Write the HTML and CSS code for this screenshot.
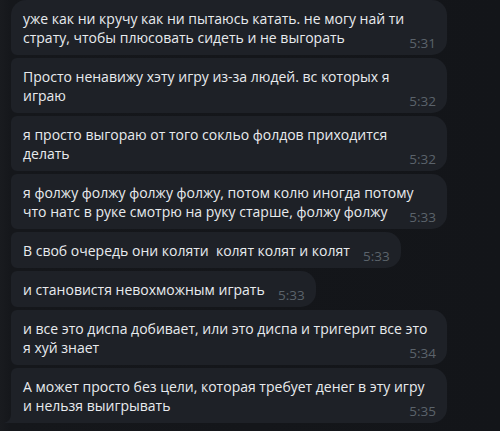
FILE: index.html
```html
<!DOCTYPE html>
<html lang="ru">
<head>
<meta charset="utf-8">
<title>Chat</title>
<link rel="stylesheet" href="styles.css">
</head>
<body>
<div class="chat">
  <div class="msg first"><span class="text">уже как ни кручу как ни пытаюсь катать. не могу най ти страту, чтобы плюсовать сидеть и не выгорать</span><span class="spacer"></span><span class="time">5:31</span></div>
  <div class="msg"><span class="text">Просто ненавижу хэту игру из-за людей. вс которых я играю</span><span class="spacer"></span><span class="time">5:32</span></div>
  <div class="msg"><span class="text">я просто выгораю от того сокльо фолдов приходится делать</span><span class="spacer"></span><span class="time">5:32</span></div>
  <div class="msg"><span class="text">я фолжу фолжу фолжу фолжу, потом колю иногда потому что натс в руке смотрю на руку старше, фолжу фолжу</span><span class="spacer"></span><span class="time">5:33</span></div>
  <div class="msg"><span class="text">В своб очередь они коляти&nbsp; колят колят и колят</span><span class="spacer"></span><span class="time">5:33</span></div>
  <div class="msg"><span class="text">и становистя невохможным играть</span><span class="spacer"></span><span class="time">5:33</span></div>
  <div class="msg"><span class="text">и все это диспа добивает, или это диспа и тригерит все это я хуй знает</span><span class="spacer"></span><span class="time">5:34</span></div>
  <div class="msg last"><span class="text">А может просто без цели, которая требует денег в эту игру и нельзя выигрывать</span><span class="spacer"></span><span class="time">5:35</span><svg class="tail" width="8" height="9" viewBox="0 0 8 9"><path d="M7 0 Q7 7 0 9 L8 9 L8 0 Z"/></svg></div>
</div>
</body>
</html>
```
FILE: styles.css
```css
html, body {
  margin: 0;
  padding: 0;
}
body {
  width: 500px;
  height: 431px;
  overflow: hidden;
  background: linear-gradient(to right, #191b1f 0px, #15171b 11px, #131519 500px);
  font-family: "Open Sans", "Noto Sans", sans-serif;
}
.chat {
  display: flex;
  flex-direction: column;
  align-items: flex-start;
  gap: 3px;
  padding-left: 11px;
}
.msg {
  position: relative;
  box-sizing: border-box;
  max-width: 436px;
  padding: 9px 11px 8px 12px;
  background: #1e2127;
  color: #e8ebee;
  font-size: 14px;
  line-height: 19px;
  border-radius: 6px 15px 15px 6px;
}
.msg.first {
  border-top-left-radius: 15px;
}
.msg.last {
  border-bottom-left-radius: 0;
}
.spacer {
  display: inline-block;
  width: 40px;
}
.time {
  position: absolute;
  right: 11px;
  bottom: 4px;
  font-size: 13.5px;
  line-height: 16px;
  color: #5b636b;
}
.tail {
  position: absolute;
  left: -7px;
  bottom: 0;
  fill: #1e2127;
}
```
